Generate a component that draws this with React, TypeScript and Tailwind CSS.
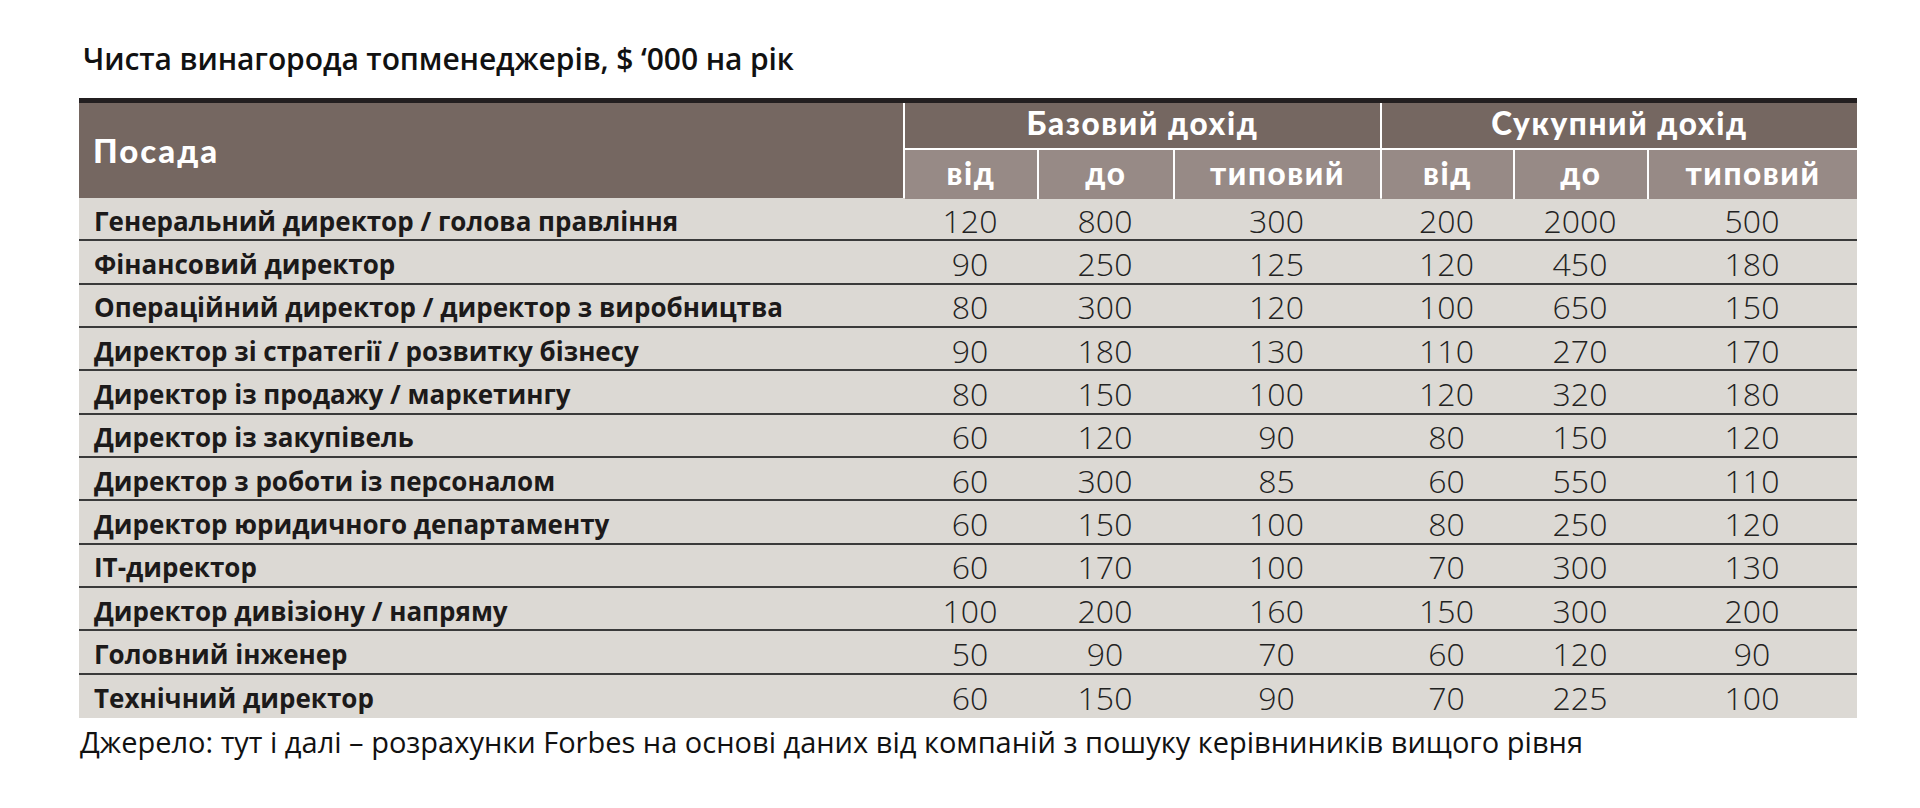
const rows: [string, number[]][] = [
  ["Генеральний директор / голова правління", [120, 800, 300, 200, 2000, 500]],
  ["Фінансовий директор", [90, 250, 125, 120, 450, 180]],
  ["Операційний директор / директор з виробництва", [80, 300, 120, 100, 650, 150]],
  ["Директор зі стратегії / розвитку бізнесу", [90, 180, 130, 110, 270, 170]],
  ["Директор із продажу / маркетингу", [80, 150, 100, 120, 320, 180]],
  ["Директор із закупівель", [60, 120, 90, 80, 150, 120]],
  ["Директор з роботи із персоналом", [60, 300, 85, 60, 550, 110]],
  ["Директор юридичного департаменту", [60, 150, 100, 80, 250, 120]],
  ["IT-директор", [60, 170, 100, 70, 300, 130]],
  ["Директор дивізіону / напряму", [100, 200, 160, 150, 300, 200]],
  ["Головний інженер", [50, 90, 70, 60, 120, 90]],
  ["Технічний директор", [60, 150, 90, 70, 225, 100]],
];

const groups = [
  { title: "Базовий дохід", widths: ["w-[132px]", "w-[136px]", "w-[207px]"] },
  { title: "Сукупний дохід", widths: ["w-[131px]", "w-[134px]", "w-[210px]"] },
];

const subs = ["від", "до", "типовий"];

export default function App() {
  return (
    <div className="w-full h-[808px] bg-white overflow-hidden">
      <div className="w-[1778px] ml-[79px]">
        {/* Title */}
        <div className="h-[98px] flex items-center pl-[4px] pt-[19px] font-['Open_Sans',sans-serif] font-semibold text-[30px] text-[#111] tracking-[-0.1px]">
          Чиста винагорода топменеджерів, $ ‘000 на рік
        </div>

        {/* Header */}
        <div className="flex h-[100px] border-t-[5px] border-[#231f20] font-['Lato',sans-serif] font-black text-white text-[31.5px] tracking-[1.6px]">
          <div className="w-[824px] bg-[#756761] flex items-center pl-[14px] text-[33px] tracking-[2px]">
            Посада
          </div>
          {groups.map((g) => (
            <div key={g.title} className="w-[477px] flex flex-col border-l-2 border-white">
              <div className="h-[45px] bg-[#756761] flex items-center justify-center pb-[3px]">
                {g.title}
              </div>
              <div className="flex-1 flex border-t-2 border-white">
                {subs.map((s, i) => (
                  <div
                    key={s}
                    className={`${g.widths[i]} bg-[#978a86] flex items-center justify-center pb-[2px] ${
                      i > 0 ? "border-l-2 border-white" : ""
                    }`}
                  >
                    {s}
                  </div>
                ))}
              </div>
            </div>
          ))}
        </div>

        {/* Body */}
        <div className="bg-[#dcd9d4]">
          {rows.map(([label, vals], r) => (
            <div
              key={label}
              className={`grid grid-cols-[824px_134px_136px_207px_133px_134px_210px] h-[43.33px] items-center pt-[4px] ${
                r < rows.length - 1 ? "border-b-2 border-[#3a3a3a]" : ""
              }`}
            >
              <div className="pl-[15px] font-['Open_Sans',sans-serif] font-bold text-[26px] text-[#1c1a1a] leading-none">
                {label}
              </div>
              {vals.map((v, i) => (
                <div
                  key={i}
                  className="text-center font-['Open_Sans',sans-serif] font-light text-[32px] text-[#222] leading-none"
                >
                  {v}
                </div>
              ))}
            </div>
          ))}
        </div>

        {/* Footer */}
        <div className="pt-[6px] pl-[1px] font-['Open_Sans',sans-serif] text-[29px] text-[#111] leading-tight">
          Джерело: тут і далі – розрахунки Forbes на основі даних від компаній з пошуку керівниників вищого рівня
        </div>
      </div>
    </div>
  );
}
